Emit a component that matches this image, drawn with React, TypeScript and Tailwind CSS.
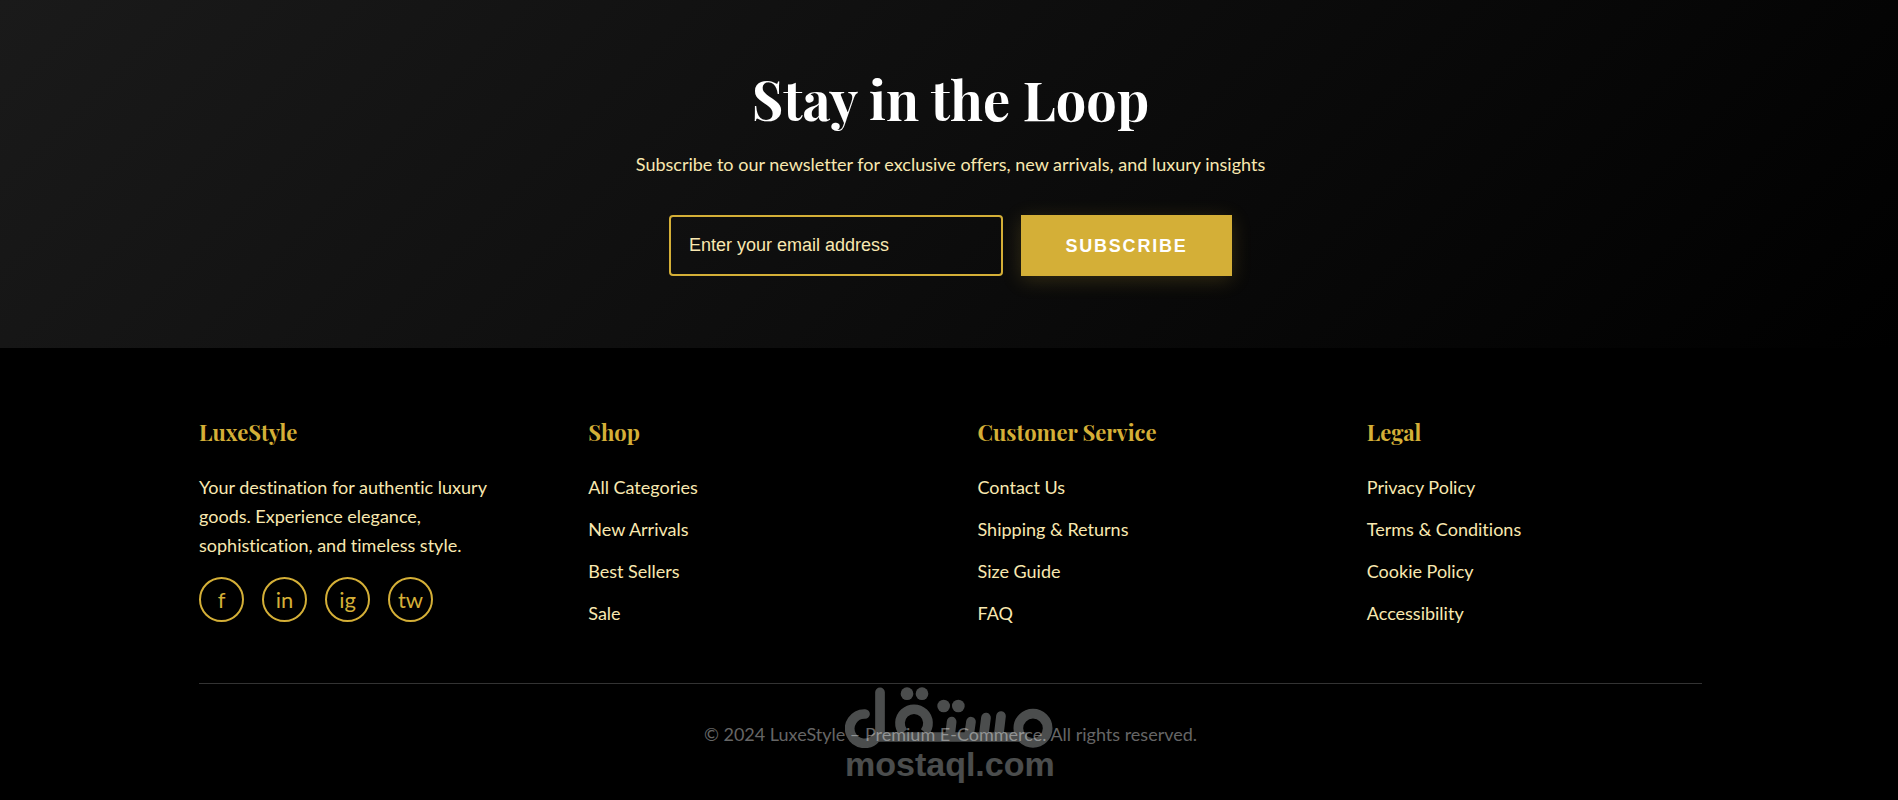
import { useState } from 'react'

const columns = [
  { title: 'Shop', links: ['All Categories', 'New Arrivals', 'Best Sellers', 'Sale'] },
  { title: 'Customer Service', links: ['Contact Us', 'Shipping & Returns', 'Size Guide', 'FAQ'] },
  { title: 'Legal', links: ['Privacy Policy', 'Terms & Conditions', 'Cookie Policy', 'Accessibility'] },
]

const socials = [
  { short: 'f', label: 'Facebook' },
  { short: 'in', label: 'LinkedIn' },
  { short: 'ig', label: 'Instagram' },
  { short: 'tw', label: 'Twitter' },
]

const headingFont = "font-['Playfair_Display','Liberation_Serif',serif] font-bold"

function Newsletter() {
  const [email, setEmail] = useState('')

  return (
    <section className="bg-[linear-gradient(135deg,#1a1a1a,#000)] pt-[67px] pr-4 pb-[72px] pl-[19px] text-center">
      <h2 className={`${headingFont} text-[54px] leading-[64px] text-white`}>Stay in the Loop</h2>
      <p className="mt-[17px] text-lg leading-8 text-[#f9e8b0]">
        Subscribe to our newsletter for exclusive offers, new arrivals, and luxury insights
      </p>
      <form className="mt-[35px] flex flex-wrap justify-center gap-[18px]" onSubmit={(e) => e.preventDefault()}>
        <input
          type="email"
          aria-label="Email address"
          placeholder="Enter your email address"
          value={email}
          onChange={(e) => setEmail(e.target.value)}
          className="h-[61px] w-[334px] rounded border-2 border-[#d4af37] px-[18px] font-['Liberation_Sans',sans-serif] text-lg text-white placeholder:text-[#f9e8b0]"
        />
        <button
          type="submit"
          className="h-[61px] w-[211px] bg-[#d4af37] font-['Liberation_Sans',sans-serif] text-lg font-bold tracking-widest text-white shadow-[0_4px_20px_rgba(212,175,55,0.2)]"
        >
          SUBSCRIBE
        </button>
      </form>
    </section>
  )
}

function Footer() {
  return (
    <footer className="pt-[63px] pr-4 pl-[19px]">
      <div className="mx-auto max-w-[1503px]">
        <div className="grid grid-cols-2 gap-[54px] lg:grid-cols-4">
          <div>
            <h3 className={`${headingFont} text-[22px] leading-[42px] text-[#d4af37]`}>LuxeStyle</h3>
            <p className="mt-5 max-w-[300px] text-lg leading-[29px] text-[#f9e8b0]">
              Your destination for authentic luxury goods. Experience elegance, sophistication, and timeless style.
            </p>
            <div className="mt-[17px] flex gap-[18px]">
              {socials.map((item) => (
                <a
                  key={item.label}
                  href="#"
                  aria-label={item.label}
                  className="flex h-[45px] w-[45px] items-center justify-center rounded-full border-2 border-[#d4af37] text-[22px] leading-8 text-[#d4af37]"
                >
                  {item.short}
                </a>
              ))}
            </div>
          </div>
          {columns.map((column) => (
            <nav key={column.title} aria-label={column.title}>
              <h3 className={`${headingFont} text-[22px] leading-[42px] text-[#d4af37]`}>{column.title}</h3>
              <ul className="mt-5 space-y-[13px]">
                {column.links.map((link) => (
                  <li key={link} className="text-lg leading-[29px] text-[#f9e8b0]">
                    <a href="#">{link}</a>
                  </li>
                ))}
              </ul>
            </nav>
          ))}
        </div>
        <div className="mt-[55px] border-t border-[#333] pt-9 pb-[51px] text-center">
          <p className="text-lg leading-[29px] text-[#666]">
            © 2024 LuxeStyle – Premium E-Commerce. All rights reserved.
          </p>
        </div>
      </div>
    </footer>
  )
}

function Watermark() {
  return (
    <div className="pointer-events-none absolute bottom-[19px] left-1/2 w-[208px] -translate-x-1/2 text-[#f8ffff] opacity-30">
      <svg
        viewBox="15 24 624 184"
        className="block w-full"
        fill="none"
        stroke="currentColor"
        strokeWidth="29"
        strokeLinecap="round"
        aria-hidden="true"
      >
        <path d="M75 105 A44 44 0 1 0 108 176 Q120 172 120 160 V40" />
        <path d="M108 174 H560" strokeLinecap="butt" />
        <path d="M190 160 A42 42 0 1 1 254 160" strokeLinecap="butt" />
        <path d="M335 128 L330 170 M393 128 L387 170 M438 116 L431 170 M483 111 L476 170" />
        <circle cx="579" cy="148" r="44" />
        <g fill="currentColor" stroke="none">
          <circle cx="201" cy="44" r="19" />
          <circle cx="246" cy="44" r="19" />
          <circle cx="311" cy="81" r="19" />
          <circle cx="355" cy="81" r="19" />
        </g>
      </svg>
      <p className="-mt-px text-center font-['Liberation_Sans',sans-serif] text-[34px] leading-[34px] font-bold">
        mostaql.com
      </p>
    </div>
  )
}

export default function App() {
  return (
    <div className="relative min-h-screen bg-black font-['Lato',sans-serif] [font-variant-ligatures:none]">
      <Newsletter />
      <Footer />
      <Watermark />
    </div>
  )
}
